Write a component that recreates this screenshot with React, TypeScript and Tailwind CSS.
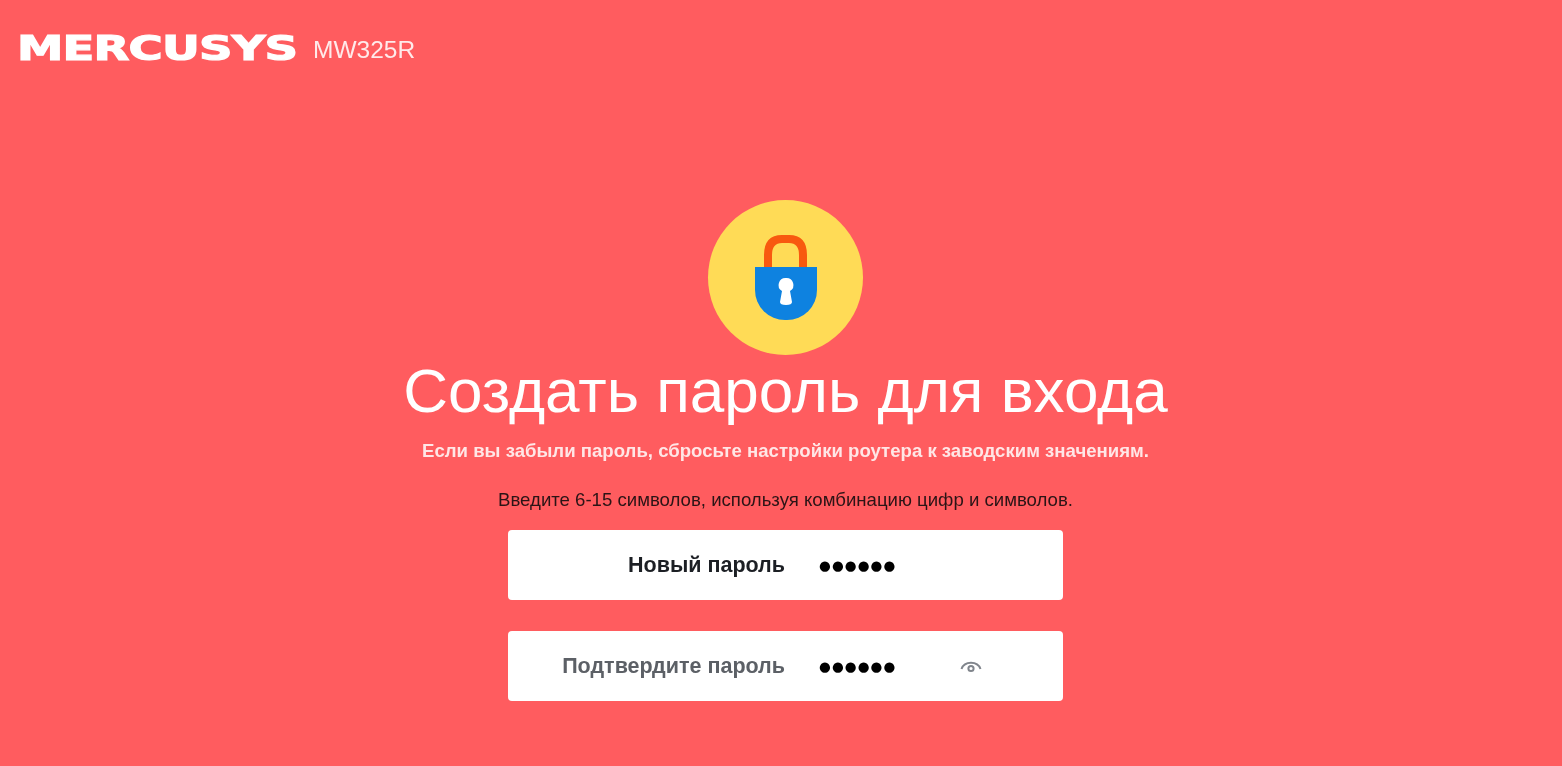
export default function App() {
  return (
    <div className="min-h-[766px] h-[766px] overflow-hidden bg-[#ff5c5f] font-['Liberation_Sans',Arial,sans-serif]">
      {/* header */}
      <div className="flex items-baseline pl-[17px] pt-[26px] h-[200px] blur-[0.5px]">
        <span className="relative inline-block w-[280px] origin-left scale-x-[1.37] font-['DejaVu_Sans',sans-serif] text-[34px] leading-[44px] font-bold tracking-[-0.6px] text-white [-webkit-text-stroke:1.2px_white]">
          MERCUSYS
        </span>
        <span className="ml-[16px] -translate-y-[2px] text-[24.5px] leading-[44px] text-[#ffeaea]">MW325R</span>
      </div>

      <div className="flex flex-col items-center pl-[9px] blur-[0.5px]">
        <div className="w-[155px] h-[155px] rounded-full bg-[#ffdb56]">
          <svg width="155" height="155" viewBox="0 0 155 155">
            <path
              d="M60 70V55Q60 39 74 39H81Q95 39 95 55V70"
              fill="none"
              stroke="#f8590f"
              strokeWidth="8"
            />
            <path
              d="M47 67H109V90A30 30 0 0 1 79 120H77A30 30 0 0 1 47 90Z"
              fill="#0e82e0"
            />
            <path
              d="M78 78A7 7 0 0 1 82 91L84 102Q84 105 78 105Q72 105 72 102L74 91A7 7 0 0 1 78 78Z"
              fill="#fff"
            />
          </svg>
        </div>

        <h1 className="mt-[2px] text-[62px] leading-[68px] font-normal text-white whitespace-nowrap">
          Создать пароль для входа
        </h1>
        <p className="mt-[14px] text-[18.6px] leading-[24px] font-bold text-[#ffe6e6] whitespace-nowrap">
          Если вы забыли пароль, сбросьте настройки роутера к заводским значениям.
        </p>
        <p className="mt-[25px] text-[18.6px] leading-[24px] text-[#2b1416] whitespace-nowrap">
          Введите 6-15 символов, используя комбинацию цифр и символов.
        </p>

        <div className="mt-[18px] flex flex-col gap-[31px]">
          <div className="w-[555px] h-[70px] rounded-[4px] bg-white flex items-center">
            <span className="w-[277px] text-right text-[21.5px] font-bold text-[#1c1f24] whitespace-nowrap">
              Новый пароль
            </span>
            <span className="ml-[34px] font-['DejaVu_Sans',sans-serif] text-[13.5px] tracking-[1.1px] text-black">
              ●●●●●●
            </span>
          </div>
          <div className="w-[555px] h-[70px] rounded-[4px] bg-white flex items-center">
            <span className="w-[277px] text-right text-[21.5px] font-bold text-[#5c6066] whitespace-nowrap">
              Подтвердите пароль
            </span>
            <span className="ml-[34px] font-['DejaVu_Sans',sans-serif] text-[13.5px] tracking-[1.1px] text-black">
              ●●●●●●
            </span>
            <svg className="ml-[64px]" width="22" height="14" viewBox="0 0 22 14" fill="none" stroke="#80858c" strokeWidth="2">
              <path d="M1.5 10A10 9 0 0 1 20.5 10" />
              <circle cx="11" cy="9.5" r="2.6" />
            </svg>
          </div>
        </div>
      </div>
    </div>
  );
}
